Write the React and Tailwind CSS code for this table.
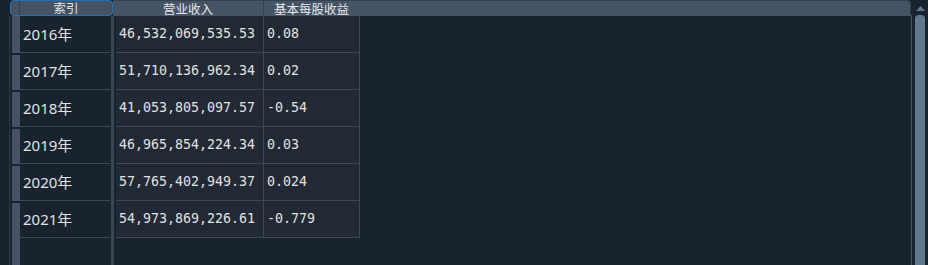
import React from "react";

const rows = [
  { year: "2016年", revenue: "46,532,069,535.53", eps: "0.08" },
  { year: "2017年", revenue: "51,710,136,962.34", eps: "0.02" },
  { year: "2018年", revenue: "41,053,805,097.57", eps: "-0.54" },
  { year: "2019年", revenue: "46,965,854,224.34", eps: "0.03" },
  { year: "2020年", revenue: "57,765,402,949.37", eps: "0.024" },
  { year: "2021年", revenue: "54,973,869,226.61", eps: "-0.779" },
];

const sans = "font-['Noto_Sans','Noto_Sans_CJK_SC',sans-serif]";
const mono = "font-['DejaVu_Sans_Mono','Noto_Sans_CJK_SC',monospace]";

function HeaderBar() {
  return (
    <div className="ml-[10px] flex h-[16px] w-[901px] shrink-0">
      {/* index column header with focus frame */}
      <div className="flex h-[16px] w-[103px] shrink-0 overflow-hidden rounded-[4px] border border-[#1A72BB] bg-[#455364]">
        <div className="h-full w-[9px] shrink-0 border-r border-[#32414f]" />
        <div className={`flex flex-1 items-end justify-center overflow-hidden text-[12.5px] leading-[13px] text-[#e6e7e8] ${sans}`}>
          索引
        </div>
      </div>
      <div className="flex h-[16px] flex-1 overflow-hidden rounded-tr-[4px] border-t border-r border-[#32414f] bg-[#455364]">
        <div className={`flex w-[151px] shrink-0 items-end justify-center border-r border-[#32414f] text-[12.5px] leading-[13px] text-[#e6e7e8] ${sans}`}>
          营业收入
        </div>
        <div className="flex flex-1">
          <div className={`flex w-[95px] shrink-0 items-end justify-center text-[12.5px] leading-[13px] text-[#e6e7e8] ${sans}`}>
            基本每股收益
          </div>
        </div>
      </div>
    </div>
  );
}

function Body() {
  return (
    <div className="flex flex-1">
      <div className="w-[9px] shrink-0" />
      <div className="w-px shrink-0 bg-[#2c3845]" />
      <div className="w-[2px] shrink-0" />
      {/* row header sections */}
      <div className="flex w-[8px] shrink-0 flex-col gap-[2px]">
        <div className="h-[37px] bg-[#455364]" />
        <div className="h-[35px] bg-[#455364]" />
        <div className="h-[35px] bg-[#455364]" />
        <div className="h-[35px] bg-[#455364]" />
        <div className="h-[35px] bg-[#455364]" />
        <div className="flex-1 bg-[#455364]" />
      </div>
      {/* frozen index column */}
      <div className="flex w-[90px] shrink-0 flex-col">
        {rows.map((r) => (
          <div
            key={r.year}
            className={`flex h-[37px] items-center border-b border-[#3d4856] pl-[3px] text-[15px] text-[#e0e1e3] ${sans}`}
          >
            {r.year}
          </div>
        ))}
      </div>
      <div className="w-px shrink-0" />
      <div className="w-[3px] shrink-0 bg-[#3a4655]" />
      <div className="w-[2px] shrink-0" />
      {/* data cells */}
      <div className="flex flex-col">
        {rows.map((r) => (
          <div key={r.year} className="flex h-[37px] border-b border-[#3d4856] bg-[#212934]">
            <div
              className={`flex w-[148px] items-center border-r border-[#3d4856] pl-[3px] text-[13.3px] text-[#e0e1e3] ${mono}`}
            >
              {r.revenue}
            </div>
            <div
              className={`flex w-[96px] items-center border-r border-[#3d4856] pl-[3px] text-[13.3px] text-[#e0e1e3] ${mono}`}
            >
              {r.eps}
            </div>
          </div>
        ))}
      </div>
    </div>
  );
}

function ScrollBar() {
  return (
    <div className="flex w-[17px] shrink-0 flex-col">
      <div className="flex h-[15px] shrink-0 items-start justify-start pl-[5px] pt-[6px]">
        <svg width="9" height="6" viewBox="0 0 9 6">
          <path d="M4.5 0 L9 5 L0 5 Z" fill="#60798B" />
        </svg>
      </div>
      <div className="flex flex-1">
        <div className="w-px bg-[#455364]" />
        <div className="w-[3px]" />
        <div className="w-[10px] rounded-t-[4px] bg-[#60798B]" />
      </div>
    </div>
  );
}

export default function App() {
  return (
    <div className="flex h-[265px] w-[928px] overflow-hidden bg-[#19232D]">
      <div className="flex w-[911px] shrink-0 flex-col">
        <HeaderBar />
        <Body />
      </div>
      <ScrollBar />
    </div>
  );
}
